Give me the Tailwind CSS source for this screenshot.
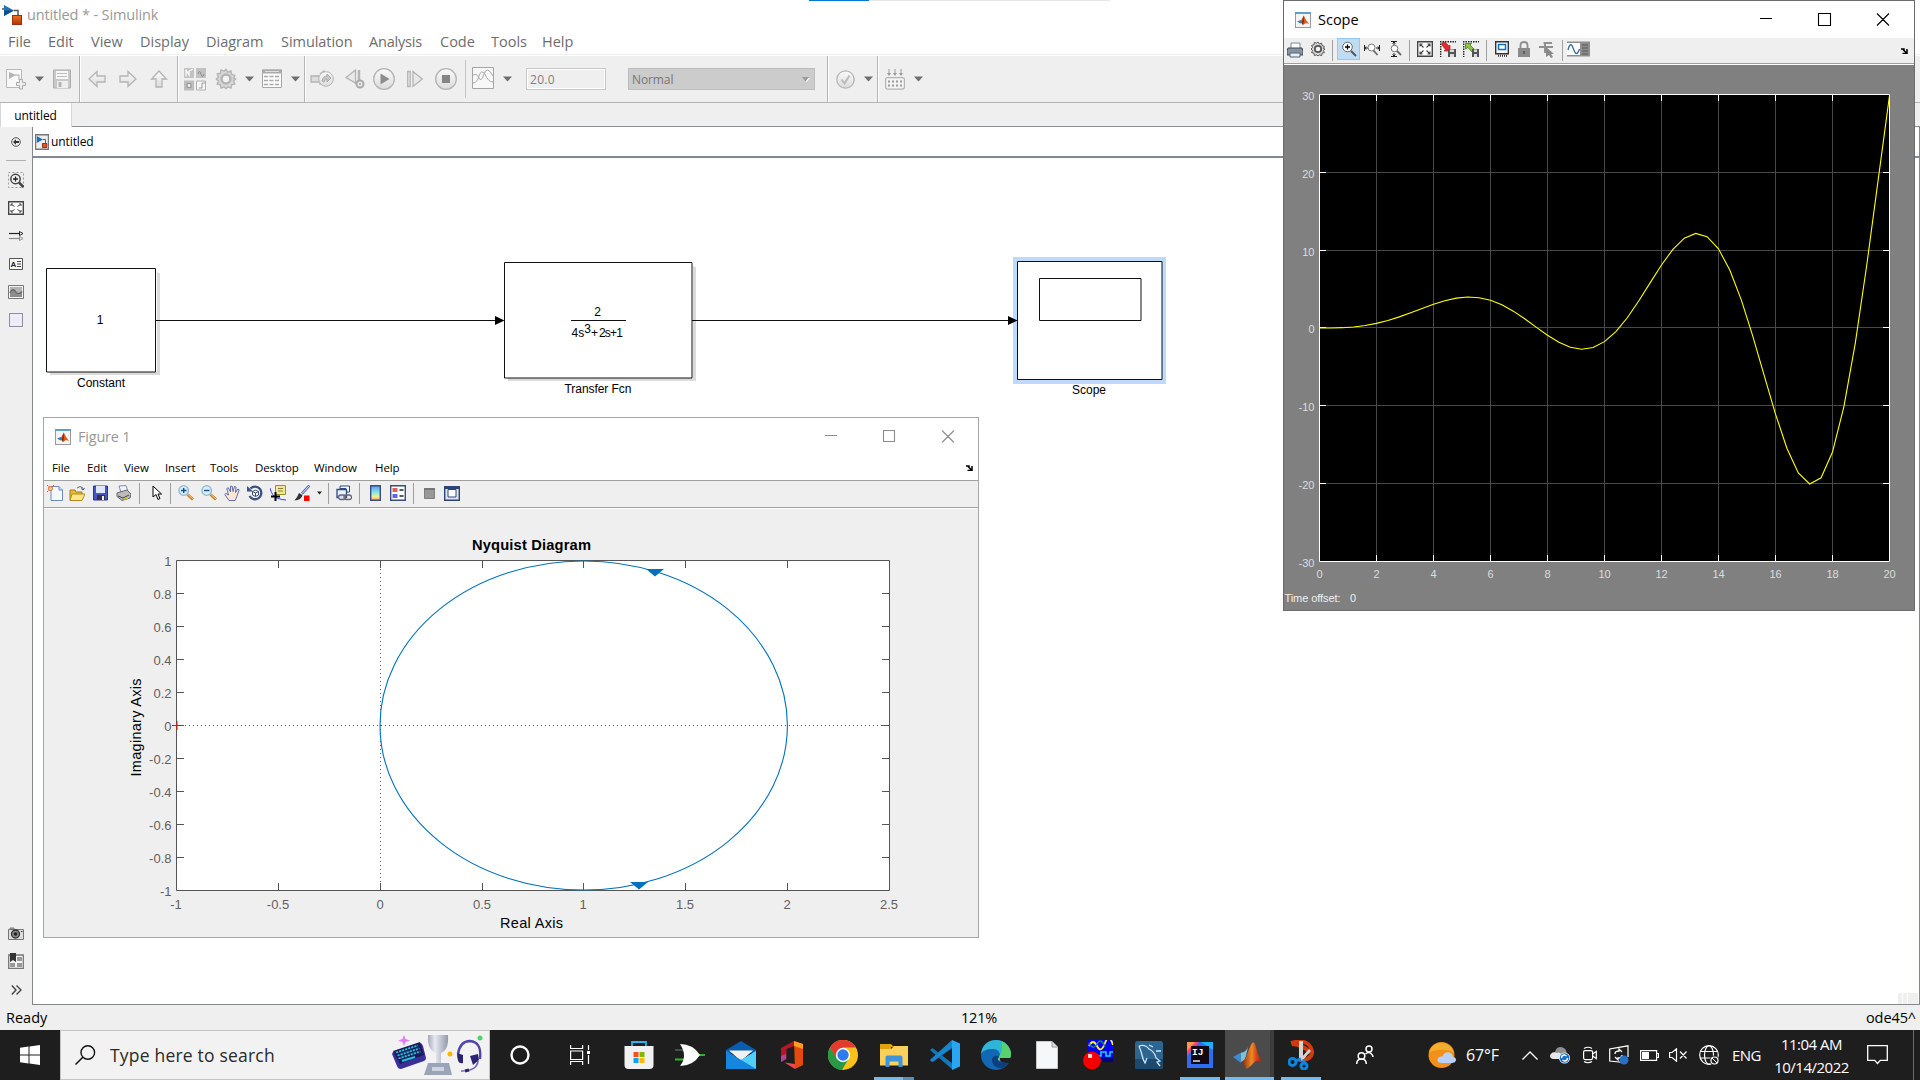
<!DOCTYPE html>
<html lang="en">
<head>
<meta charset="utf-8">
<title>untitled * - Simulink</title>
<script src="https://cdn.jsdelivr.net/npm/@tailwindcss/browser@4"></script>
</head>
<body class="relative flex h-[1080px] w-[1920px] flex-col overflow-hidden bg-white font-['Open_Sans',sans-serif] text-black">
<svg class="absolute h-0 w-0">
  <defs>
    <linearGradient id="btn" x1="0" y1="0" x2="0" y2="1"><stop offset="0" stop-color="#fafafa"/><stop offset="1" stop-color="#dcdcdc"/></linearGradient>
    <linearGradient id="orange" x1="0" y1="0" x2="0" y2="1"><stop offset="0" stop-color="#f07020"/><stop offset="1" stop-color="#b83008"/></linearGradient>
    <linearGradient id="cbar" x1="0" y1="0" x2="0" y2="1"><stop offset="0" stop-color="#6f8ff0"/><stop offset=".45" stop-color="#7fe8e0"/><stop offset=".75" stop-color="#f6ee90"/><stop offset="1" stop-color="#f0a080"/></linearGradient>
    <linearGradient id="mred" x1="0" y1="0" x2="1" y2="0"><stop offset="0" stop-color="#7a1f10"/><stop offset=".5" stop-color="#f08a24"/><stop offset=".7" stop-color="#d9481a"/><stop offset="1" stop-color="#9c200c"/></linearGradient>
    <linearGradient id="cup" x1="0" y1="0" x2="1" y2="0"><stop offset="0" stop-color="#a4a9b8"/><stop offset=".35" stop-color="#e8eaf2"/><stop offset="1" stop-color="#9298ab"/></linearGradient>
    <symbol id="matlab" viewBox="0 0 16 16">
      <rect x=".5" y=".5" width="15" height="15" fill="#f4f4f4" stroke="#9a9a9a"/><rect x="0" y="0" width="16" height="2" fill="#5f9fcb"/>
      <path d="M2 9.500l4-1.500 1.500 2L5.500 11.500z" fill="#3a78b8"/><path d="M6 8.500l2.800-5L11 8l3 4-3-1-3 2-1.500-2z" fill="#dd5a14"/><path d="M8.800 3.500L9 9l-1 4-1.500-2z" fill="#8c2a10"/>
    </symbol>
    <symbol id="gear" viewBox="0 0 16 16"><path d="M8 1l1.300 2 2.300-.8.5 2.400 2.300.8-.9 2.200L15 8l-1.500 1.400.9 2.200-2.300.6-.5 2.400-2.300-.8L8 15l-1.300-1.200-2.300.8-.5-2.400-2.300-.6.9-2.200L1 8l1.500-1.400-.9-2.200 2.300-.6.5-2.400 2.300.8z" fill="#d8d8d8" stroke="currentColor"/><circle cx="8" cy="8" r="3.200" fill="#f4f4f4" stroke="currentColor" stroke-width="1.800"/></symbol>
    <symbol id="dock" viewBox="0 0 8 6"><path d="M1 1h3v1.500M3 1.500l3 3M7 1v4.500H2.500" fill="none" stroke="#000" stroke-width="1.500"/></symbol>
    <symbol id="lens" viewBox="0 0 16 16"><path d="M9.500 9.500l5.500 5" stroke="#c9812d" stroke-width="3"/><path d="M10 9.500l5 4.500" stroke="#f7c46a" stroke-width="1"/><circle cx="5.700" cy="5.500" r="4.800" fill="#d3efff" stroke="#8fb6d2" stroke-width="1.300"/></symbol>
    <symbol id="tri" viewBox="0 0 9 6"><path d="M0 .5h9L4.500 5.500z" fill="#6d6d72"/></symbol>
  </defs>
</svg>

<!-- title bar and menus -->
<header class="flex h-[55px] shrink-0 flex-col border-b border-[#f0f0f0] bg-white">
  <div class="flex h-7 items-center pl-[2px] pt-[1px]">
    <svg class="h-5 w-5" viewBox="0 0 20 20"><path d="M0 4h4M12 5.500h4v5" stroke="#555" fill="none" stroke-width="1.500"/><path d="M2 0l10 5.500L2 11z" fill="#1f74b8"/><path d="M2 5.500h10L2 11z" fill="#0d4f8a"/><rect x="10.500" y="10.500" width="9" height="9" fill="url(#orange)" stroke="#993010"/></svg>
    <span class="ml-[5px] whitespace-nowrap text-[14.500px] leading-5 tracking-[-0.140px] text-[#999]">untitled * - Simulink</span>
  </div>
  <nav class="flex h-[26px] items-center gap-4 whitespace-nowrap pl-2 pt-[2px] text-[14.500px] leading-5 text-[#6d6d6d]">
    <span class="w-6">File</span><span class="w-[27px]">Edit</span><span class="w-[33px]">View</span><span class="w-[50px]">Display</span><span class="w-[59px]">Diagram</span><span class="w-[72px] tracking-[-0.050px]">Simulation</span><span class="w-[55px] tracking-[-0.200px]">Analysis</span><span class="w-[35px]">Code</span><span class="w-[35px]">Tools</span><span class="w-8">Help</span>
  </nav>
</header>

<!-- main toolbar -->
<div class="flex h-[48px] shrink-0 items-center border-b border-t border-b-[#b4b4b4] border-t-white bg-[#efefef] text-[#b4b4b4]">
  <svg class="ml-[6px] h-[22px] w-[22px]" viewBox="0 0 22 22"><path d="M.500 1.500h15v18H.500z" fill="#f8f8f8" stroke="#b8b8b8"/><path d="M3 4l7 3-7 4z" fill="#b4b4b4"/><path d="M9 7h4v5" stroke="#aaa" fill="none"/><path d="M13.500 11.500h3v3h3v3h-3v3.500h-3v-3.500h-3v-3h3z" fill="#eee" stroke="#aaa"/></svg>
  <svg class="ml-[7px] h-[6px] w-[9px]"><use href="#tri"/></svg>
  <svg class="ml-[9px] h-5 w-[18px]" viewBox="0 0 18 20"><path d="M.500 1h17v18H.500z" fill="#c9c9c9" stroke="#adadad"/><rect x="3" y="2" width="12" height="8" fill="#f7f7f7"/><path d="M4 4.500h10M4 7.500h10" stroke="#bbb"/><rect x="4" y="12" width="11" height="7" fill="#eee"/><rect x="5.500" y="13" width="3" height="5" fill="#b5b5b5"/></svg>
  <i class="ml-2 h-[46px] w-[2px] border-l border-[#b4b4b4] bg-white"></i>
  <svg class="ml-[7px] h-[18px] w-[18px]" viewBox="0 0 18 18"><path d="M1 9l8-7.500V6h8v6H9v4.500z" fill="url(#btn)" stroke="currentColor" stroke-width="1.300"/></svg>
  <svg class="ml-[13px] h-[18px] w-[18px]" viewBox="0 0 18 18"><path d="M17 9L9 1.500V6H1v6h8v4.500z" fill="url(#btn)" stroke="currentColor" stroke-width="1.300"/></svg>
  <svg class="ml-[13px] h-[18px] w-[18px]" viewBox="0 0 18 18"><path d="M9 1l7.500 8H12v8H6V9H1.500z" fill="url(#btn)" stroke="currentColor" stroke-width="1.300"/></svg>
  <i class="ml-[9px] h-[46px] w-[2px] border-l border-[#b4b4b4] bg-white"></i>
  <svg class="ml-[5px] h-[23px] w-[22px]" viewBox="0 0 22 23"><path d="M0 0h10v10H0zM12 0h10v10H12z" fill="#c2c2c2"/><path d="M0 12.500h10v10H0z" fill="#bdbdbd"/><path d="M12.500 13h9v9h-9z" fill="#f5f5f5" stroke="#b0b0b0"/><path d="M2 1.500v7M2 2l3 5V3l4-2" stroke="#fff" fill="none" stroke-width="1.200"/><path d="M15 20h3v-5h3M3 15.500h4v4H3z" stroke="#999" fill="none"/><path d="M14 6q1.500-5 3 0t3 0" fill="none" stroke="#888"/><path d="M4 16.500h2v2H4z" fill="#fff"/></svg>
  <svg class="ml-[9px] h-[22px] w-[22px]"><use href="#gear"/></svg>
  <svg class="ml-2 h-[6px] w-[9px]"><use href="#tri"/></svg>
  <svg class="ml-2 h-5 w-5" viewBox="0 0 20 20"><path d="M.500 1h19v17.500H.500z" fill="#fbfbfb" stroke="#a8a8a8"/><path d="M0 .500h20v4H0z" fill="#aaa"/><path d="M3 2.500h14" stroke="#ddd"/><path d="M2 7.500h16M2 11.500h16M2 15.500h16" stroke="#aaa" stroke-dasharray="4 1.500" stroke-width="1.300"/></svg>
  <svg class="ml-[9px] h-[6px] w-[9px]"><use href="#tri"/></svg>
  <i class="ml-1 h-[46px] w-[2px] border-l border-[#b4b4b4] bg-white"></i>
  <svg class="ml-1 h-5 w-6" viewBox="0 0 24 20"><path d="M1 7h9v6H1zM10 5l4-3v3M10 13v3" fill="#ddd" stroke="currentColor" stroke-width="1.300"/><circle cx="16" cy="10" r="7.300" fill="url(#btn)" stroke="currentColor"/><path d="M12 12q1-5 5-5V5l4 4-4 4v-3q-2 0-3 3z" fill="#c8c8c8" stroke="#aaa"/></svg>
  <svg class="ml-[11px] h-5 w-5" viewBox="0 0 20 20"><path d="M10.500 1v13L1 8.500z" fill="#e9e9e9" stroke="currentColor" stroke-width="1.300"/><path d="M14 1v10" stroke="#b4b4b4" stroke-width="2.500"/><circle cx="15" cy="15" r="3.500" fill="#eee" stroke="#a8a8a8" stroke-width="2"/><circle cx="15" cy="15" r="1" fill="#999"/></svg>
  <svg class="ml-2 h-[22px] w-[22px]" viewBox="0 0 22 22"><circle cx="11" cy="11" r="10.300" fill="url(#btn)" stroke="currentColor" stroke-width="1.300"/><path d="M7.500 5.500l9 5.500-9 5.500z" fill="#8d8d8d"/></svg>
  <svg class="ml-3 h-[18px] w-4" viewBox="0 0 16 18"><path d="M.700 1.500h2.500v15H.700zM6 1.500L15.200 9 6 16.500z" fill="#e9e9e9" stroke="currentColor" stroke-width="1.300"/></svg>
  <svg class="ml-3 h-[22px] w-[22px]" viewBox="0 0 22 22"><circle cx="11" cy="11" r="10.300" fill="url(#btn)" stroke="currentColor" stroke-width="1.300"/><path d="M7 7h8v8H7z" fill="#858585"/></svg>
  <i class="ml-2 h-[38px] w-px bg-[#c4c4c4]"></i>
  <svg class="ml-[6px] h-[22px] w-[22px] -translate-y-px" viewBox="0 0 22 22"><path d="M.500.500h21v21H.500z" fill="#f7f7f7" stroke="#a4a4a4"/><path d="M1 16q4 0 6-7t6-2q3 8 8 8M1 8q4-2 6 3t5-4 9 2" fill="none" stroke="#a8a8a8"/></svg>
  <svg class="ml-[9px] h-[6px] w-[9px]"><use href="#tri"/></svg>
  <div class="ml-[14px] flex h-[22px] w-[80px] items-center border border-[#c8c8c8] bg-[#efefef] pl-[3px] pt-px text-xs text-[#808080] tracking-[.3px] outline outline-1 -outline-offset-2 outline-white">20.0</div>
  <div class="ml-[22px] flex h-[22px] w-[187px] items-center justify-between border border-[#bdbdbd] bg-[#ccc] pl-[3px] pr-1 pt-px text-xs tracking-[-.1px] text-[#777]"><span>Normal</span><svg class="h-[5px] w-2" viewBox="0 0 8 5"><path d="M1 1h7L4.500 5z" fill="#fff"/><path d="M0 0h7L3.500 4.500z" fill="#999"/></svg></div>
  <i class="ml-3 h-[46px] w-[2px] border-l border-[#b4b4b4] bg-white"></i>
  <svg class="ml-[7px] h-[19px] w-[19px]" viewBox="0 0 19 19"><circle cx="9.500" cy="9.500" r="8.700" fill="url(#btn)" stroke="currentColor" stroke-width="1.300"/><path d="M5.500 9.500l3 4 5-8" fill="none" stroke="#bbb" stroke-width="2"/></svg>
  <svg class="ml-[9px] h-[6px] w-[9px]"><use href="#tri"/></svg>
  <i class="ml-[4px] h-[46px] w-[2px] border-l border-[#b4b4b4] bg-white"></i>
  <svg class="ml-[6px] h-[21px] w-5" viewBox="0 0 20 21"><path d="M4 0v4M10 0v4M16 0v4" stroke="#aaa" stroke-width="1.200"/><path d="M2 4h4L4 7zM8 4h4l-2 3zM14 4h4l-2 3z" fill="#999"/><rect x=".6" y="8.600" width="18.800" height="11.500" rx="2" fill="#f3f3f3" stroke="currentColor" stroke-width="1.200"/><path d="M3 12.500h14M3 16.500h14" stroke="#999" stroke-width="2" stroke-dasharray="2 2"/></svg>
  <svg class="ml-[9px] h-[6px] w-[9px]"><use href="#tri"/></svg>
</div>

<!-- document tabs -->
<div class="flex h-[24px] shrink-0 border-b border-[#8b8e96] bg-[#efefef]">
  <div class="flex h-6 w-[72px] items-center justify-center border-l border-r border-[#d8d8d8] bg-white pr-px pt-px text-xs tracking-[-.1px]">untitled</div>
</div>

<main class="flex h-[878px] shrink-0 bg-[#efefef]">
  <!-- palette -->
  <aside class="flex w-8 flex-col items-center text-[#444]">
    <svg class="mt-[10px] h-[10px] w-[10px]" viewBox="0 0 10 10"><circle cx="5" cy="5" r="4.300" fill="#eee" stroke="#555"/><path d="M2 5l3-2.800V4h3v2H5v1.800z" fill="#333"/></svg>
    <i class="mt-[13px] h-px w-5 bg-[#b0b0b0]"></i>
    <svg class="mt-[11px] h-4 w-4" viewBox="0 0 16 16"><path d="M.500.500h15v15H.500z" fill="none" stroke="#999" stroke-dasharray="2 2"/><circle cx="7.500" cy="7" r="4.700" fill="#f4f4f4" stroke="currentColor" stroke-width="1.500"/><path d="M5 7h5M7.500 4.500v5" stroke="#222" stroke-width="1.300"/><path d="M11 10.500l4.500 4.500" stroke="currentColor" stroke-width="2.500"/></svg>
    <svg class="mt-[13px] h-[14px] w-4" viewBox="0 0 16 14"><path d="M.700.700h14.600v12.600H.700z" fill="#fff" stroke="currentColor" stroke-width="1.400"/><path d="M3 5V3h2M11 3h2v2M3 9v2h2M13 9v2h-2M3.500 3.500l3 2M12.500 3.500l-3 2M3.500 10.500l3-2M12.500 10.500l-3-2" fill="none" stroke="currentColor"/></svg>
    <svg class="mt-4 h-[10px] w-[15px]" viewBox="0 0 15 10"><path d="M0 2.500h11" stroke="#222" stroke-width="1.200"/><path d="M0 7.500h11" stroke="#888" stroke-width="1.200"/><path d="M10.500.500l3.500 2-3.500 2z" fill="#fff" stroke="#222"/><path d="M10.500 5.500l3.500 2-3.500 2z" fill="#fff" stroke="#888"/></svg>
    <svg class="mt-[17px] h-3 w-[14px]" viewBox="0 0 14 12"><path d="M.500.500h13v11H.500z" fill="#f8f8f8" stroke="#555"/><text x="1.500" y="9" font-size="8" font-weight="700" fill="#222" font-family="Liberation Sans">A</text><path d="M8 3.500h4M8 6h4M8 8.500h4" stroke="#444"/></svg>
    <svg class="mt-[15px] h-[14px] w-4" viewBox="0 0 16 14"><path d="M.500.500h15v13H.500z" fill="#f3f3f3" stroke="#777"/><path d="M2 2h12v10H2z" fill="#b4b4b4"/><path d="M2 8q3-6 6-.500 3 3 6-1" fill="none" stroke="#666" stroke-width="1.600"/><path d="M2 9q3-6 6-.500 3 3 6-1v4.500H2z" fill="#8c8c8c"/></svg>
    <i class="mt-[14px] h-[14px] w-[14px] border border-[#8f8fa0] bg-[#ebebfa]"></i>
    <svg class="mt-[600px] h-[13px] w-4" viewBox="0 0 16 13"><path d="M.500 2.500h15v10H.500zM2 1h4v1H2z" fill="#ddd" stroke="#777"/><circle cx="7.500" cy="7" r="4" fill="#888" stroke="#333" stroke-width="1.300"/><circle cx="7.500" cy="7" r="1.800" fill="#222"/><path d="M13 4.500h1.500" stroke="#333"/></svg>
    <svg class="mt-[13px] h-4 w-4" viewBox="0 0 16 16"><path d="M.700 2h14.600v13.300H.700z" fill="#f3f3f3" stroke="#777" stroke-width="1.300"/><path d="M9 4h5v4H9zM9 10h5v4H9zM2 10h5v4H2z" fill="#999"/><path d="M2 0h6v9L5 7 2 9z" fill="#333"/></svg>
    <svg class="mt-4 h-[10px] w-[11px]" viewBox="0 0 11 10"><path d="M.800.500L5 5 .800 9.500M5.500.500L10 5 5.500 9.500" fill="none" stroke="currentColor" stroke-width="1.400"/></svg>
  </aside>
  <!-- editor -->
  <section class="flex w-[1888px] flex-col border-b border-l border-r border-[#828790] bg-white">
    <div class="flex h-[31px] shrink-0 items-center border-b-2 border-[#828790] pl-[2px] pt-px text-xs">
      <svg class="h-4 w-[14px]" viewBox="0 0 16 16" preserveAspectRatio="none"><path d="M.700.700h14.600v14.600H.700z" fill="#eee" stroke="#777" stroke-width="1.400"/><path d="M2 2l7 3.500L2 9z" fill="#1c6fb0"/><path d="M9 5.500h3v4" stroke="#555" fill="none"/><path d="M8.500 9.500h5v4h-5z" fill="#dd5a20" stroke="#922"/></svg>
      <span class="ml-[2px] tracking-[-.1px]">untitled</span>
    </div>
    <svg class="h-[846px] w-[1886px]" viewBox="33 158 1886 846" font-family="Liberation Sans, sans-serif" font-size="12">
      <g fill="#000" opacity=".14"><path d="M50 373h108V272h-1v100H50zM50 375h110V273h-2v100H50zM508 379h186V266h-1v112H508zM508 381h188V267h-2v112H508z"/></g>
      <path d="M1013 257h153v127h-153z" fill="#bfd9fb"/>
      <g fill="#fff" stroke="#111">
        <path d="M46.500 268.500h109v103.500h-109zM504.500 262.500h187.500V378H504.500zM1017.500 261.500h144.500v118h-144.500zM1039.500 278.500h101.500v42h-101.500z"/>
        <path d="M156 320.500h340M692 320.500H1010M571 320.500h55"/>
      </g>
      <path d="M495 316l9.500 4.500-9.500 4.500zM1008 316l9.500 4.500-9.500 4.500z"/>
      <g text-anchor="middle">
        <text x="100" y="324">1</text><text x="597.500" y="315.500">2</text>
        <text x="101" y="387" textLength="48">Constant</text><text x="598" y="393" textLength="67">Transfer Fcn</text><text x="1089" y="394">Scope</text>
      </g>
      <text x="571.500" y="337">4s<tspan dy="-4.500">3</tspan><tspan dy="4.500">+</tspan><tspan dx="1" textLength="24" lengthAdjust="spacing">2s+1</tspan></text>
      <path d="M1898 993h4v11h-4zM1903 993h4v11h-4zM1908 993h10v11h-10z" fill="#efefef"/>
    </svg>
  </section>
</main>

<!-- status bar -->
<footer class="flex h-[25px] shrink-0 items-center whitespace-nowrap bg-[#efefef] pl-[6px] pt-px text-[14.500px] leading-5">
  <span class="w-[955px]">Ready</span><span class="w-[905px] tracking-[-.2px]">121%</span><span class="tracking-[-.1px]">ode45^</span>
</footer>

<!-- taskbar -->
<div class="flex h-[50px] shrink-0 items-center bg-[#1e1e1e] text-white">
  <div class="flex w-[60px] justify-center"><svg class="h-5 w-5" viewBox="0 0 20 20"><path d="M0 2.800L8.500 1.600v8H0zM9.500 1.500L20 0v9.600H9.500zM0 10.500h8.500v8L0 17.300zM9.500 10.500H20V20L9.500 18.500z" fill="#fff"/></svg></div>
  <div class="flex h-[50px] w-[430px] items-center border border-[#c4c4c4] bg-[#f2f2f2] text-[#2a2a2a]">
    <svg class="ml-[14px] h-5 w-[21px]" viewBox="0 0 21 20"><circle cx="12.800" cy="7.500" r="6.800" fill="none" stroke="#111" stroke-width="1.400"/><path d="M7.800 12.300L.500 19.500" stroke="#111" stroke-width="1.500"/></svg>
    <span class="ml-[14px] w-[282px] whitespace-nowrap text-[17.500px] tracking-[.2px]">Type here to search</span>
    <svg class="h-[42px] w-[92px]" viewBox="0 0 92 42"><path d="M12 1l1.500 4L18 6.500l-4.500 1.500L12 12l-1.500-4L6 6.500 10.500 5z" fill="#e879f9"/><path d="M1 18l27-9q2 0 3 3l3 12q0 2-2 3L9 35q-3 0-4-3L0 20z" fill="#3a2f96"/><path d="M1 17l27-9 4 13-24 9z" fill="#1d1a5c"/><g stroke="#22c3d6" stroke-width="1.800" stroke-dasharray="2.200 1"><path d="M4 18.500l22-7M5.500 21.500l22-7M6.500 24.500l22-7"/></g><path d="M10 27l13-4" stroke="#22c3d6" stroke-width="2"/><path d="M36 1h20q1 15-7 18v10h-5V19q-9-3-8-18z" fill="url(#cup)"/><path d="M36 29h21l3 12H32z" fill="#9aa3b8"/><path d="M40 33h12v4H40z" fill="#cdd3e0"/><circle cx="58" cy="20" r="2.500" fill="#ffb400"/><circle cx="88" cy="4" r="2.500" fill="#4ad66d"/><path d="M66 20Q68 7 78 7q12 1 10 18" fill="none" stroke="#4f46a5" stroke-width="2.400"/><path d="M86 27q-1 10-17 10" fill="none" stroke="#6a5fc0" stroke-width="1.600"/><path d="M65 19l6 2v8q-6 2-6-10zM78 22l8-2 1 6-6 5z" fill="#2c2473"/><path d="M73 37l4-1" stroke="#2c2473" stroke-width="3"/></svg>
  </div>
  <div class="flex w-[60px] justify-center"><svg class="h-5 w-5" viewBox="0 0 20 20"><circle cx="10" cy="10" r="8.500" fill="none" stroke="#fff" stroke-width="2.400"/></svg></div>
  <div class="flex w-[63px] pl-5"><svg class="h-5 w-5" viewBox="0 0 20 20"><g fill="none" stroke="#fff" stroke-width="1.200"><path d="M.600 0v3.500h12V0M.600 20v-3.500h12V20M.600 6h12v8.500H.600zM18.500 0v5M18.500 10v9"/></g><path d="M17 6h3v3h-3z" fill="#fff"/></svg></div>
  <div class="flex w-[51px] justify-center"><svg class="h-[30px] w-[30px]" viewBox="0 0 30 30"><path d="M8 8V2h14v6" fill="none" stroke="#29b6f0" stroke-width="1.800"/><path d="M.500 6h29v19q0 4-4 4h-21q-4 0-4-4z" fill="#f1f1f1"/><path d="M9.500 12h5v5h-5z" fill="#f25022"/><path d="M15.500 12h5v5h-5z" fill="#7fba00"/><path d="M9.500 18h5v5h-5z" fill="#00a4ef"/><path d="M15.500 18h5v5h-5z" fill="#ffb900"/></svg></div>
  <div class="flex w-[51px] justify-center"><svg class="h-[24px] w-[30px]" viewBox="0 0 30 24"><path d="M0 7h9" stroke="#465" stroke-width="1.500"/><path d="M0 16.500h9M24 12h6" stroke="#2db52d" stroke-width="1.800"/><path d="M5 1q13 0 20 11Q18 23 5 23q8-10 0-22z" fill="#fff"/></svg></div>
  <div class="flex w-[51px] justify-center"><svg class="h-[28px] w-[30px]" viewBox="0 0 30 28"><path d="M0 9L15 0l15 9v3H0z" fill="#0a5cad"/><path d="M3 9.500h24L15 20z" fill="#f2f2f2"/><path d="M0 10l15 9 15-9v18H0z" fill="#2aa7ee"/><path d="M30 10L15 19l15 9z" fill="#4fd0fb"/><path d="M0 10l30 18H0z" fill="#1686dc"/></svg></div>
  <div class="flex w-[51px] justify-center"><svg class="h-[28px] w-[24px]" viewBox="0 0 24 28"><path d="M1 7L14 0v5L6.500 8v10L1 21z" fill="#b5152b"/><path d="M14 0l9 3v21l-8 4z" fill="#e64a0a"/><path d="M14 0l9 3v5l-9-3z" fill="#ff9e1b"/><path d="M4.500 21.500L15 23v5z" fill="#ee4a4f"/><path d="M1 15v6l5-3v-5z" fill="#b04595"/></svg></div>
  <div class="flex w-[51px] justify-center"><svg class="h-[30px] w-[30px]" viewBox="0 0 30 30"><circle cx="15" cy="15" r="15" fill="#fbc116"/><path d="M2 7.500A15 15 0 0 0 14 30l7-12H9z" fill="#269a44"/><path d="M2 7.500A15 15 0 0 1 28 7.500H15L8.500 18z" fill="#e33b2e"/><circle cx="15" cy="15" r="7.200" fill="#fff"/><circle cx="15" cy="15" r="5.700" fill="#2f7cee"/></svg></div>
  <div class="flex h-[50px] w-[51px] flex-col items-center justify-between"><svg class="mt-[13px] h-[24px] w-[28px]" viewBox="0 0 28 24"><path d="M0 1h11l3 3h-3v4H0z" fill="#e1a20c"/><path d="M0 6h11l3-3h14v19.500H0z" fill="#fbd05a"/><path d="M5.500 24V14.500q0-2 2-2h13q2 0 2 2V24h-4v-5.500h-9V24z" fill="#3d93dc"/></svg><i class="flex h-[3px] w-10 bg-[#76b9ed]"><i class="ml-[29px] h-[3px] w-[11px] bg-[#5c8db5]"></i></i></div>
  <div class="flex w-[51px] justify-center"><svg class="h-[30px] w-[30px]" viewBox="0 0 30 30"><path d="M0 10l2.500-2L23 24v6zM0 20l2.500 2L23 7V0z" fill="#1077bd"/><path d="M22 0l8 3.500v23L22 30z" fill="#2aa5f2"/><path d="M0 20l22-20v8L2.500 22z" fill="#1585d0"/></svg></div>
  <div class="flex w-[51px] justify-center"><svg class="h-[30px] w-[30px]" viewBox="0 0 30 30"><circle cx="15" cy="15" r="15" fill="#1268b5"/><path d="M0 14C1 5 7 0 15 0c9 0 15 7 15 14 0 5-4 7-8 7-5 0-6-2-4-4 2-3 0-8-6-8C6 9 1 11 0 14z" fill="#2fb5d8"/><path d="M21 1.500C27 4 30 10 30 14c0 5-4 7-8 7-5 0-6-2-4-4 4-5 3-10 3-15.500z" fill="#59d269"/><path d="M28 22c-6 2-15-1-10-5-3-3-8 0-7 4 1 6 8 9 13 6z" fill="#0d3f7c"/><path d="M19 18q-1 6 9.500 4.500L31 18z" fill="#1e1e1e"/></svg></div>
  <div class="flex w-[51px] justify-center"><svg class="h-[28px] w-[22px]" viewBox="0 0 22 28"><path d="M.500.500H16l5.500 5.500v21.500H.500z" fill="#f6f7f9" stroke="#c8c8c8"/><path d="M16 .500V6h5.500" fill="#ddd" stroke="#999"/></svg></div>
  <div class="flex w-[51px] justify-center"><svg class="h-[30px] w-[30px]" viewBox="0 0 30 30"><path d="M5 0h25v22H5z" fill="#0000e8"/><path d="M5 0h25v9H5z" fill="#0000f8"/><path d="M6 6q4-8 8 0t8-3 8 2" fill="none" stroke="#ffee20" stroke-width="1.800"/><path d="M6 3q4 8 8 1t8 3" fill="none" stroke="#188878" stroke-width="1.500"/><path d="M12 16h6v-4h5v4h4v-4h3" fill="none" stroke="#20d8ff" stroke-width="1.500"/><path d="M18 18h12v4H18z" fill="#000080"/><circle cx="9" cy="20.500" r="9" fill="#f40000"/><path d="M5 14h4v4H5z" fill="#ffd5d5"/></svg></div>
  <div class="flex w-[51px] justify-center"><svg class="h-[28px] w-[28px]" viewBox="0 0 28 28"><rect width="28" height="28" rx="2.500" fill="#2b6590"/><path d="M0 18h28v8q0 2-2 2H2q-2 0-2-2z" fill="#1c496e"/><path d="M4 5q6-2 10 3 6 3 7 9l4 3-3 1 3 4M4 5q2 5 3 9 1 5 3 8l2-5M14 4l4 2M21 10h5" fill="none" stroke="#cfe3f2" stroke-width="1.300"/></svg></div>
  <div class="flex h-[50px] w-[51px] flex-col items-center justify-between"><svg class="mt-3 h-[26px] w-[26px]" viewBox="0 0 26 26"><path d="M0 0h14L0 16z" fill="#f5457a"/><path d="M26 0v26H0V14L12 0z" fill="#2f6df0"/><path d="M0 0h8L0 9z" fill="#ff9750"/><path d="M14 0h12v8z" fill="#1bb0ff"/><path d="M4 4h18v18H4z" fill="#120714"/><path d="M6 19h7" stroke="#fff" stroke-width="1.300"/><text x="5" y="13" font-family="Liberation Mono" font-size="9.500" font-weight="700" fill="#fff">IJ</text></svg><i class="h-[3px] w-10 bg-[#76b9ed]"></i></div>
  <div class="flex h-[50px] w-[49px] flex-col items-center justify-between border-r-4 border-[#3c3c3c] bg-[#4b4b4b]"><svg class="mt-[11px] h-[28px] w-[30px]" viewBox="0 0 30 28"><path d="M0 16l9-5 3 5-4 6z" fill="#3f8ac9"/><path d="M8 12q5-1 7-6l-3 13-4 2z" fill="#7fc0d8"/><path d="M8 21q4-1 7-10 3-9 5.500-10 2 2 4 11l5 10q-5-4-8-1-4 5-8 7-2-5-5.500-7z" fill="url(#mred)"/></svg><i class="ml-1 h-[3px] w-[49px] bg-[#76b9ed]"></i></div>
  <div class="flex h-[50px] w-[53px] flex-col items-center justify-between"><svg class="mt-[10px] h-[30px] w-[26px]" viewBox="0 0 26 30"><path d="M3 3q18-5 21 8 1 9-13 9M4 4q12 1 18 9" fill="none" stroke="#d23c0c" stroke-width="4"/><path d="M11 1h4v18h-4zM21 9l2 2-9 10-2-2z" fill="#d4d4d4"/><g fill="none" stroke="#0f86d8" stroke-width="3"><circle cx="4.500" cy="22" r="3.500"/><circle cx="16" cy="26" r="3"/><path d="M7 21l6-2M16 23v-4"/></g></svg><i class="h-[3px] w-10 bg-[#76b9ed]"></i></div>
  <svg class="ml-[29px] h-5 w-[18px]" viewBox="0 0 18 20"><g fill="none" stroke="#fff" stroke-width="1.500"><circle cx="13" cy="4" r="3"/><circle cx="5.500" cy="11" r="3.300"/><path d="M.700 19q0-5 4.800-5t4.800 5M9.500 9q3.500-3 6 0 1.500 1.500 1.500 3"/></g></svg>
  <svg class="ml-[54px] h-[28px] w-[29px]" viewBox="0 0 29 28"><circle cx="13.500" cy="14" r="13" fill="#f39019"/><path d="M1 11A13 13 0 0 1 26 12q-8-6-25-1z" fill="#f3ae2e"/><path d="M14 22q-5 0-4.500-3.500 1-3.500 5-3 2-5 7-4 3 1 3 4 4 1 3.500 4-1 2.500-4 2.500z" fill="#b9d0f8"/></svg>
  <span class="ml-[9px] w-[56px] text-[16px] tracking-[-.1px]">67°F</span>
  <svg class="h-[9px] w-4" viewBox="0 0 16 9"><path d="M.500 8.500L8 1l7.500 7.500" fill="none" stroke="#fff" stroke-width="1.300"/></svg>
  <svg class="ml-3 h-[18px] w-5" viewBox="0 0 20 18"><path d="M3 13q-4-1-2.500-4.500Q2 6 5 6q1-5 6-5 5 1 5.500 5V13z" fill="#8f8f8f"/><path d="M3 13q-4-1-2.500-4.500Q3 5 7 7q4-2 6 6z" fill="#e8e8e8"/><circle cx="14.500" cy="12" r="5.500" fill="#fff"/><circle cx="14.500" cy="12" r="4.800" fill="#1d6fc2"/><path d="M11.500 12q0-3 3-3l2 1M17.500 12q0 3-3 3l-2-1" fill="none" stroke="#fff" stroke-width="1.300"/></svg>
  <svg class="ml-[13px] h-[18px] w-[14px]" viewBox="0 0 14 18"><g fill="none" stroke="#fff" stroke-width="1.200"><rect x=".6" y="4.600" width="9" height="9" rx="1.500"/><path d="M9.600 8l3.700-2.500v7L9.600 10M1 2.500Q5 0 9 2.500M1 15.500q4 2.500 8 0"/></g></svg>
  <svg class="ml-3 h-5 w-5" viewBox="0 0 20 20"><path d="M15 17.500L.700 16V4L19 .800V12" fill="none" stroke="#fff" stroke-width="1.200"/><path d="M6 9q0-3 4-3V4l3 3M13 10q0 3-4 3v2l-3-3" fill="none" stroke="#fff" stroke-width="1.300"/><circle cx="15" cy="15" r="4.500" fill="#2870c4"/></svg>
  <svg class="ml-[11px] h-[11px] w-[19px]" viewBox="0 0 19 11"><path d="M.600.600h16v9.800H.600zM17 3.500h1.500v4H17" fill="none" stroke="#fff" stroke-width="1.200"/><path d="M2 2h7v7H2z" fill="#fff"/></svg>
  <svg class="ml-[10px] h-[14px] w-[18px]" viewBox="0 0 18 14"><path d="M.600 4.500h2.500L7.500.800v12.400L3.100 9.500H.600zM11 3.500l6.500 7M17.500 3.500l-6.500 7" fill="none" stroke="#fff" stroke-width="1.200"/></svg>
  <svg class="ml-3 h-5 w-5" viewBox="0 0 20 20"><g fill="none" stroke="#fff" stroke-width="1.200"><circle cx="10" cy="10" r="9.300"/><ellipse cx="10" cy="10" rx="4.500" ry="9.300"/><path d="M1.500 6.500h17M1.500 13h17"/></g><circle cx="15.500" cy="15.500" r="5" fill="#1e1e1e"/><circle cx="15.500" cy="15.500" r="3.500" fill="none" stroke="#fff" stroke-width="1.200"/><path d="M13 13l5 5" stroke="#fff"/></svg>
  <span class="ml-[13px] w-[36px] text-[15px] tracking-[-.6px]">ENG</span>
  <div class="flex w-[87px] flex-col items-center gap-[1px] whitespace-nowrap text-[15px] leading-[22px] tracking-[-.5px]"><span>11:04 AM</span><span>10/14/2022</span></div>
  <svg class="ml-3 h-5 w-[21px]" viewBox="0 0 21 20"><path d="M.700.700h19.600v14.600h-7L10.500 18.500l-2.800-3.200h-7z" fill="none" stroke="#fff" stroke-width="1.300"/></svg>
  <i class="ml-[25px] h-[50px] w-px bg-[#6a6a6a]"></i>
</div>

<!-- progress strip on the top edge -->
<div class="absolute left-[809px] top-0 flex h-px w-[301px] bg-[#e6e6e6]"><i class="h-px w-[60px] bg-[#0078d7]"></i></div>

<!-- Scope window -->
<section class="absolute left-[1283px] top-0 flex h-[611px] w-[632px] flex-col border border-[#6c6c6c] bg-[#808080]">
  <div class="flex h-[37px] shrink-0 items-center bg-white pl-[11px]">
    <svg class="h-4 w-4"><use href="#matlab"/></svg>
    <span class="ml-[7px] w-[442px] text-[14.500px]">Scope</span>
    <svg class="h-[13px] w-[130px]" viewBox="0 0 130 13"><path d="M0 5.500h12M58.500.500h12v12h-12zM117 .500l12 12M129 .500l-12 12" fill="none" stroke="#000" stroke-width="1.100"/></svg>
  </div>
  <div class="flex h-[26px] shrink-0 items-start border-b border-[#a0a0a0] bg-[#efefef] pl-[3px] text-[#555]">
    <svg class="mt-1 h-4 w-4" viewBox="0 0 16 16"><path d="M4 1h9v6H4z" fill="#fff" stroke="#789"/><path d="M1 6h14l1 3v4H0V9z" fill="#8793a0" stroke="#445"/><path d="M3 11h10v4H3z" fill="#e8eef5" stroke="#567"/></svg>
    <svg class="ml-[7px] mt-[3px] h-4 w-4"><use href="#gear"/></svg>
    <i class="ml-[6px] mt-[2px] h-[21px] w-px bg-[#a0a0a0]"></i>
    <span class="ml-1 flex h-[22px] w-[23px] items-center justify-center border border-[#90c8f6] bg-[#c0dcf3]"><svg class="h-4 w-4" viewBox="0 0 16 16"><circle cx="6.500" cy="6" r="4.800" fill="#fff" stroke="#666"/><path d="M4 6h5M6.500 3.500v5" stroke="#000" stroke-width="1.300"/><path d="M10 10l5 5" stroke="#555" stroke-width="2"/></svg></span>
    <svg class="ml-1 mt-1 h-4 w-4" viewBox="0 0 16 16"><path d="M.500 3v6M15.500 3v6M1 6h3M12 6h3M2 4.500L1 6l1 1.500M14 4.500l1 1.500-1 1.500" stroke="#222" fill="none"/><circle cx="7.500" cy="5.500" r="3.500" fill="#fff" stroke="#777"/><path d="M9.500 8.500l4 4.500" stroke="#666" stroke-width="1.800"/></svg>
    <svg class="ml-[9px] mt-[3px] h-4 w-[13px]" viewBox="0 0 13 16"><path d="M2 .500h6M2 15.500h6M5 1v3M5 12v3M3.500 2.500L5 1l1.500 1.500M3.500 13.500L5 15l1.500-1.500" stroke="#222" fill="none"/><circle cx="5.500" cy="7.500" r="3.300" fill="#fff" stroke="#777"/><path d="M8 10l4 4" stroke="#666" stroke-width="1.800"/></svg>
    <i class="ml-[7px] mt-[2px] h-[21px] w-px bg-[#a0a0a0]"></i>
    <svg class="ml-[7px] mt-[3px] h-4 w-4" viewBox="0 0 16 16"><path d="M.700.700h14.600v14.600H.700z" fill="#fff" stroke="#444" stroke-width="1.400"/><path d="M3 5.500V3h2.500M10.500 3H13v2.500M3 10.500V13h2.500M13 10.500V13h-2.500M3 3l3.500 3.500M13 3L9.500 6.500M3 13l3.500-3.500M13 13L9.500 9.500" fill="none" stroke="#444" stroke-width="1.100"/></svg>
    <svg class="ml-[7px] mt-[3px] h-4 w-4" viewBox="0 0 16 16"><path d="M0 .700h16M.700 0v16" stroke="#222" stroke-width="1.400" stroke-dasharray="1.500 1"/><path d="M2 2l3-1 4 4 1-1v6H4l1.500-1.500-4-5z" fill="#e02b2b" stroke="#a01010" stroke-width=".6"/><path d="M8 8h8v8H8z" fill="#555"/><path d="M10 8.500h4v2.500h-4zM10 13h4v3h-4z" fill="#ddd"/></svg>
    <svg class="ml-[7px] mt-[3px] h-4 w-4" viewBox="0 0 16 16"><path d="M0 .700h16M.700 0v16" stroke="#222" stroke-width="1.400" stroke-dasharray="1.500 1"/><path d="M2.500 2.500h6L7 4l5 5-2.500 2.500-4.500-5L2.500 8z" fill="#8cc63f" stroke="#3f7a10" stroke-width=".8"/><path d="M9 8h7v8H9z" fill="#555"/><path d="M11 8.500h3v2.500h-3zM11 13h3v3h-3z" fill="#ddd"/></svg>
    <i class="ml-[7px] mt-[2px] h-[21px] w-px bg-[#a0a0a0]"></i>
    <svg class="ml-2 mt-[3px] h-4 w-[14px]" viewBox="0 0 14 16"><path d="M.700.700h12.600v12H.700z" fill="#fff" stroke="#333" stroke-width="1.400"/><path d="M3.500 3.500h7v5h-7z" fill="#fff" stroke="#0a70c0" stroke-width="1.500"/><path d="M3 14.800h9" stroke="#333" stroke-width="2" stroke-dasharray="1 1"/></svg>
    <svg class="ml-[9px] mt-[3px] h-4 w-3" viewBox="0 0 12 16"><path d="M2.500 8V4Q2.500 1 6 1t3.500 3v4" fill="none" stroke="#8f8f8f" stroke-width="1.800"/><path d="M0 7h12v9H0z" fill="#8a8a8a"/><path d="M6 10v3" stroke="#555" stroke-width="1.500"/></svg>
    <svg class="ml-[9px] mt-[3px] h-[17px] w-4" viewBox="0 0 16 17"><path d="M4.500 2H13M0 6h14M6 2v10" stroke="#909090" stroke-width="2" fill="none"/><path d="M7 6l8 7h-3l2 3-2 1-2-3-3 2z" fill="#888"/></svg>
    <i class="ml-[7px] mt-[2px] h-[21px] w-px bg-[#a0a0a0]"></i>
    <svg class="ml-1 mt-[3px] h-4 w-[23px]" viewBox="0 0 23 16"><path d="M0 .500h23v15H0z" fill="#8e8e8e"/><path d="M0 2h13v12H0z" fill="#fff"/><path d="M1 9q2.500-10 5.500-1t6 0" fill="none" stroke="#35689f" stroke-width="1.300"/><path d="M15 4h6M15 7h6M15 10h6M15 13h6" stroke="#555"/></svg>
    <svg class="ml-[310px] mt-[10px] h-[6px] w-2"><use href="#dock"/></svg>
  </div>
  <svg class="h-[546px] w-[630px] shrink-0" viewBox="1284 64 630 546" font-family="Liberation Sans, sans-serif" font-size="11" fill="#ddd">
    <path d="M1284 64.500h630" stroke="#fff"/>
    <path d="M1319.500 94.500H1889.500v467H1319.500z" fill="#000"/>
    <g id="scope-grid"></g>
    <path d="M1319.500 94.500H1889.500v467H1319.500z" fill="none" stroke="#fff"/>
    <polyline id="scope-line" fill="none" stroke="#ffff00" stroke-width="1.100"/>
    <text x="1284.500" y="602" textLength="56" fill="#f0f0f0">Time offset:</text><text x="1350" y="602" fill="#f0f0f0">0</text>
  </svg>
</section>

<!-- Figure window -->
<section class="absolute left-[43px] top-[417px] flex h-[521px] w-[936px] flex-col border border-[#a6a6a6] bg-[#efefef]">
  <div class="flex h-[37px] shrink-0 items-center bg-white pl-[11px]">
    <svg class="h-4 w-4"><use href="#matlab"/></svg>
    <span class="ml-[7px] w-[747px] text-[14.500px] tracking-[-.2px] text-[#999]">Figure 1</span>
    <svg class="h-[13px] w-[130px]" viewBox="0 0 130 13"><path d="M0 5.500h12M58.500.500h11v11h-11zM117 .500l12 12M129 .500l-12 12" fill="none" stroke="#8c8c8c" stroke-width="1.100"/></svg>
  </div>
  <nav class="flex h-[25px] shrink-0 items-center whitespace-nowrap bg-white pl-2 text-[11.500px] font-medium tracking-[-.1px]">
    <span class="w-[35px]">File</span><span class="w-[37px]">Edit</span><span class="w-[41px]">View</span><span class="w-[45px]">Insert</span><span class="w-[45px]">Tools</span><span class="w-[59px]">Desktop</span><span class="w-[61px]">Window</span><span class="w-[590px]">Help</span>
    <svg class="h-[6px] w-2 shrink-0"><use href="#dock"/></svg>
  </nav>
  <div class="flex h-[28px] shrink-0 items-center border-b border-t border-[#a0a0a0] pb-[2px] pl-[3px]">
    <svg class="h-4 w-4" viewBox="0 0 16 16"><path d="M4 1.500h8l3.500 3.500v10.500H4z" fill="#f4f9ff" stroke="#6d8ab8"/><path d="M12 1.500V5h3.500" fill="#cfe0f5" stroke="#6d8ab8"/><circle cx="3.500" cy="3.500" r="2" fill="#ffd27a" stroke="#d8623a"/><path d="M0 0l1.500 1.500M7 0L5.500 1.500M0 7l1.500-1.500" stroke="#d8623a"/></svg>
    <svg class="ml-[6px] h-4 w-4" viewBox="0 0 16 16"><path d="M1 5h5l1 2h6v8H1z" fill="#e8b93a" stroke="#a67c10"/><path d="M3 9h13l-3 6.500H1z" fill="#ffe58a" stroke="#b58a18"/><path d="M8 3q3-3 6 0v2M12 3.500l2 1.500 1.500-2" fill="none" stroke="#567"/></svg>
    <svg class="ml-2 h-4 w-[15px]" viewBox="0 0 15 16"><path d="M.500 1h14v14H.500z" fill="#4a55c0" stroke="#2c3588"/><path d="M3 1h9v7H3z" fill="#dde6fa"/><path d="M4 10h8v5H4z" fill="#334"/><path d="M9 11h2v4H9z" fill="#eee"/></svg>
    <svg class="ml-2 h-4 w-[15px]" viewBox="0 0 15 16"><path d="M3 1l7-.5 2 6-7 1z" fill="#eef4fd" stroke="#88a"/><path d="M1 8l10-3 4 4-1 4-8 2.500-5-4z" fill="#bcbcbc" stroke="#666"/><path d="M2 11l5 2 6-3" fill="none" stroke="#444"/><path d="M8 14l4-1" stroke="#d8c040" stroke-width="1.500"/></svg>
    <i class="ml-[8px] h-[21px] w-px bg-[#a0a0a0]"></i>
    <svg class="ml-3 h-4 w-[10px]" viewBox="0 0 10 16"><path d="M1 1v11l3-2.500L6 14.500l2-1L6 9h3.500z" fill="#fff" stroke="#000"/></svg>
    <i class="ml-2 h-[21px] w-px bg-[#a0a0a0]"></i>
    <svg class="ml-[7px] h-4 w-4" viewBox="0 0 16 16"><use href="#lens"/><path d="M3 5.500h5.500M5.700 3v5" stroke="#1c4a8c" stroke-width="1.400"/></svg>
    <svg class="ml-[7px] h-4 w-4" viewBox="0 0 16 16"><use href="#lens"/><path d="M3 5.500h5.500" stroke="#1c4a8c" stroke-width="1.400"/></svg>
    <svg class="ml-[7px] h-4 w-4" viewBox="0 0 16 16"><path d="M5 15.500L.800 9.500l1-1.200L4.500 10 2.800 3.500l1.500-.8L6.500 7V1.200h1.700L9 6.500l1.500-5 1.500.5-.5 5.500 2.300-3.500 1.400.8-2.500 7-1.500 3.700z" fill="#ffe6d2" stroke="#4a62a8" stroke-width=".9"/></svg>
    <svg class="ml-[7px] h-4 w-4" viewBox="0 0 16 16"><path d="M3.500 3.500a6.300 6.300 0 1 1-1 7.500" fill="none" stroke="#3b527e" stroke-width="2.300"/><path d="M0 1v5.500h6z" fill="#3b527e"/><path d="M5.500 6.500l3-1.300 3 1.300v3.500l-3 1.500-3-1.500zM5.500 6.500l3 1.500 3-1.500M8.500 8v3.500" fill="#fff" stroke="#3b527e"/></svg>
    <svg class="ml-[7px] h-4 w-4" viewBox="0 0 16 16"><path d="M5.500.500h10v9h-10z" fill="#efe79a" stroke="#9a8f28"/><path d="M8 3.500h5M8 6h5" stroke="#8a8030"/><path d="M0 3q2 8 7 10t9 2" fill="none" stroke="#3344ee"/><path d="M1 11.500h9M5.500 7v9" stroke="#000" stroke-width="2"/></svg>
    <svg class="ml-2 h-4 w-4" viewBox="0 0 16 16"><path d="M15.500.500L8 8.500" stroke="#5868b0" stroke-width="2.600"/><path d="M15 1L8.500 8" stroke="#d9e2ff"/><path d="M5 8l3.500 2q-1 5-8 5.500Q3 13 5 8z" fill="#333"/><path d="M10 10.500h5.500V16H10z" fill="#f00"/></svg>
    <svg class="ml-[7px] h-1 w-[5px]" viewBox="0 0 5 4"><path d="M0 .500h5L2.500 3.500z" fill="#222"/></svg>
    <i class="ml-[6px] h-[21px] w-px bg-[#a0a0a0]"></i>
    <svg class="ml-[7px] h-4 w-4" viewBox="0 0 16 16"><path d="M4 1h9.500v6H4z" fill="#fff" stroke="#2f4a80"/><path d="M1 4.500h9.500v8H1z" fill="#e9f1fd" stroke="#2f4a80" stroke-width="1.300"/><path d="M4 4h6" stroke="#2f4a80" stroke-width="2"/><rect x="2.500" y="10" width="7" height="4.500" rx="2.200" fill="#dde" stroke="#667" stroke-width="1.300"/><rect x="8" y="10" width="7.500" height="4.500" rx="2.200" fill="none" stroke="#667" stroke-width="1.300"/></svg>
    <i class="ml-[7px] h-[21px] w-px bg-[#a0a0a0]"></i>
    <svg class="ml-[10px] h-4 w-[11px]" viewBox="0 0 11 16"><path d="M.700.700h9.600v14.600H.700z" fill="url(#cbar)" stroke="#35507f" stroke-width="1.400"/></svg>
    <svg class="ml-[9px] h-4 w-4" viewBox="0 0 16 16"><path d="M.700.700h14.600v14.600H.700z" fill="#fff" stroke="#35507f" stroke-width="1.400"/><path d="M2.500 3h5v4h-5z" fill="#e06060"/><path d="M2.500 9h5v4h-5z" fill="#6068e0"/><path d="M9.500 5h4M9.500 11h4" stroke="#222" stroke-width="1.300"/></svg>
    <i class="ml-[7px] h-[21px] w-px bg-[#a0a0a0]"></i>
    <svg class="ml-[10px] h-[11px] w-[11px]" viewBox="0 0 11 11"><path d="M.500.500h10v10H.500z" fill="#989898" stroke="#808080"/><path d="M0 1h11" stroke="#777" stroke-width="2"/></svg>
    <svg class="ml-[9px] h-[15px] w-4" viewBox="0 0 16 15"><path d="M.700.700h14.600v13.600H.700z" fill="#dfe6f0" stroke="#2a4478" stroke-width="1.400"/><path d="M0 1.500h16" stroke="#2a4478" stroke-width="3"/><path d="M4 3.500h8v7.500H4z" fill="#fff" stroke="#2a4478"/></svg>
  </div>
  <svg class="h-[429px] w-[934px]" viewBox="44 508 934 429" font-family="Liberation Sans, sans-serif" font-size="13" fill="#5f5f5f">
    <path d="M44 508.500h934" stroke="#fff"/>
    <path d="M176.500 560.500h713v330h-713z" fill="#fff" stroke="#555"/>
    <g id="fig-ticks"></g>
    <path d="M380.500 561v329M177 725.500h712" stroke="#555" stroke-dasharray="1 3"/>
    <ellipse cx="583.700" cy="725.500" rx="203.700" ry="164.500" fill="none" stroke="#0072bd" stroke-width="1.100"/>
    <path d="M646 569h18l-9 7.500zM630 882h18l-9 7.500z" fill="#0072bd"/>
    <path d="M172 725.500h10M177 721v9" stroke="#f00"/>
    <g fill="#000" text-anchor="middle"><text x="531.500" y="550" font-size="14.700" font-weight="700" textLength="119">Nyquist Diagram</text><text x="531.500" y="928" font-size="14.500" textLength="63">Real Axis</text><text transform="translate(141 727.500) rotate(-90)" font-size="14.500" textLength="98">Imaginary Axis</text></g>
  </svg>
</section>

<script>
  // Scope trace: unit step of 1 through 2 / (4s^3 + 2s + 1), logged every 0.4 s.
  const f = ([y, v, a]) => [v, a, (2 - y - 2 * v) / 4];
  const add = (s, k, h) => s.map((q, i) => q + k[i] * h);
  let s = [0, 0, 0];
  const pts = [], h = 0.02;
  for (let n = 0; n <= 1000; n++) {
    if (n % 20 === 0) pts.push([1319.5 + n * h * 28.5, 328 - s[0] * 7.775].join(','));
    const k1 = f(s), k2 = f(add(s, k1, h / 2)), k3 = f(add(s, k2, h / 2)), k4 = f(add(s, k3, h));
    s = s.map((q, i) => q + h / 6 * (k1[i] + 2 * k2[i] + 2 * k3[i] + k4[i]));
  }
  document.getElementById('scope-line').setAttribute('points', pts.join(' '));

  let g = '';
  for (let i = 0; i <= 10; i++) {
    const x = 1319.5 + i * 57;
    if (i > 0 && i < 10) g += `<path d="M${x} 95V561" stroke="#484848"/><path d="M${x} 95v6M${x} 561v-6" stroke="#fff"/>`;
    g += `<text x="${x}" y="578" text-anchor="middle">${i * 2}</text>`;
  }
  for (let i = 0; i <= 6; i++) {
    const y = Math.floor(94.5 + i * 77.83) + 0.5;
    if (i > 0 && i < 6) g += `<path d="M1320 ${y}H1889" stroke="#484848"/><path d="M1320 ${y}h6M1889 ${y}h-6" stroke="#fff"/>`;
    g += `<text x="1314.500" y="${y + 5}" text-anchor="end">${30 - i * 10}</text>`;
  }
  document.getElementById('scope-grid').innerHTML = g;

  let t = '';
  for (let i = 0; i <= 7; i++) {
    const x = Math.floor(176.5 + i * 101.86) + 0.5;
    t += `<path d="M${x} 561v7M${x} 890v-7" stroke="#555"/><text x="${x - 0.5}" y="909" text-anchor="middle">${-1 + i * 0.5}</text>`;
  }
  for (let i = 0; i <= 10; i++) {
    const y = 560.5 + i * 33;
    t += `<path d="M177 ${y}h7M889 ${y}h-7" stroke="#555"/><text x="171.500" y="${y + 5.5}" text-anchor="end">${+(1 - i * 0.2).toFixed(1)}</text>`;
  }
  document.getElementById('fig-ticks').innerHTML = t;
</script>
</body>
</html>
